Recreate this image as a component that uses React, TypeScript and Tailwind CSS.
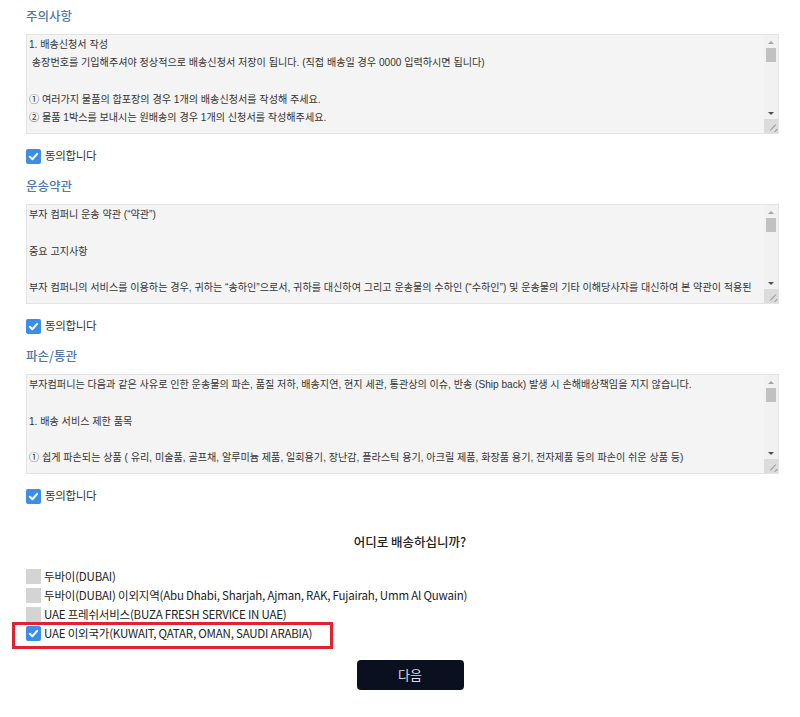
import React from "react";

const KR = { fontFamily: '"Noto Sans CJK KR", "Noto Sans", sans-serif' };
const TA = { fontFamily: '"Liberation Sans", "Noto Sans CJK KR", sans-serif' };

function Scrollbar() {
  return (
    <div className="absolute right-0 top-0 bottom-0 w-[14px] bg-[#f1f1f1] flex flex-col items-center">
      <div className="h-[12px] w-full flex items-center justify-center pt-[3px]">
        <div className="w-0 h-0 border-l-[3px] border-r-[3px] border-b-[3px] border-l-transparent border-r-transparent border-b-[#a3a3a3]" />
      </div>
      <div className="w-[10px] h-[14px] bg-[#c1c1c1] mt-[1px]" />
      <div className="flex-1" />
      <div className="h-[12px] w-full flex items-center justify-center">
        <div className="w-0 h-0 border-l-[3px] border-r-[3px] border-t-[3px] border-l-transparent border-r-transparent border-t-[#505050]" />
      </div>
      <div className="h-[14px] w-full bg-[#dcdcdc] relative overflow-hidden">
        <div className="absolute right-[1px] bottom-[5px] w-[8px] h-[1px] bg-[#9a9a9a] -rotate-45" />
        <div className="absolute right-[0px] bottom-[2px] w-[4px] h-[1px] bg-[#9a9a9a] -rotate-45" />
      </div>
    </div>
  );
}

function Box({ lines }: { lines: string[] }) {
  return (
    <div className="relative w-[753px] h-[100px] bg-[#f4f4f4] border border-[#e4e4e4] overflow-hidden">
      <div
        className="pl-[2px] pt-[1px] pr-[18px] text-[10.1px] leading-[18.25px] text-[#333] whitespace-pre"
        style={TA}
      >
        {lines.map((l, i) => (
          <div key={i} className="h-[18.25px]">
            {l}
          </div>
        ))}
      </div>
      <Scrollbar />
    </div>
  );
}

function Check({ checked }: { checked: boolean }) {
  return checked ? (
    <div className="w-[15px] h-[15px] rounded-[2px] bg-[#3b8ee6] flex items-center justify-center shrink-0">
      <svg width="11" height="11" viewBox="0 0 12 12" fill="none">
        <path d="M2 6.3 L4.8 9 L10 3.2" stroke="white" strokeWidth="2.2" strokeLinecap="round" strokeLinejoin="round" />
      </svg>
    </div>
  ) : (
    <div className="w-[15px] h-[15px] bg-[#d4d4d4] shrink-0" />
  );
}

function Section({ title, lines }: { title: string; lines: string[] }) {
  return (
    <div className="flex flex-col">
      <div className="h-[20px] flex items-center text-[12.5px] font-medium text-[#5079a6]" style={KR}>
        {title}
      </div>
      <div className="mt-[8px]">
        <Box lines={lines} />
      </div>
      <div className="mt-[12px] h-[20px] flex items-center gap-[4px]">
        <Check checked />
        <span className="text-[11.5px] tracking-[-0.3px] text-[#333]" style={KR}>
          동의합니다
        </span>
      </div>
      <div className="h-[10px]" />
    </div>
  );
}

export default function App() {
  const options = [
    "두바이(DUBAI)",
    "두바이(DUBAI) 이외지역(Abu Dhabi, Sharjah, Ajman, RAK, Fujairah, Umm Al Quwain)",
    "UAE 프레쉬서비스(BUZA FRESH SERVICE IN UAE)",
    "UAE 이외국가(KUWAIT, QATAR, OMAN, SAUDI ARABIA)",
  ];
  return (
    <div className="w-[800px] h-[717px] bg-white pl-[26px] pr-[6px] pt-[6px] overflow-hidden">
      <Section
        title="주의사항"
        lines={[
          "1. 배송신청서 작성",
          " 송장번호를 기입해주셔야 정상적으로 배송신청서 저장이 됩니다. (직접 배송일 경우 0000 입력하시면 됩니다)",
          "",
          "① 여러가지 물품의 합포장의 경우 1개의 배송신청서를 작성해 주세요.",
          "② 물품 1박스를 보내시는 원배송의 경우 1개의 신청서를 작성해주세요.",
        ]}
      />
      <Section
        title="운송약관"
        lines={[
          "부자 컴퍼니 운송 약관 (“약관”)",
          "",
          "중요 고지사항",
          "",
          "부자 컴퍼니의 서비스를 이용하는 경우, 귀하는 “송하인”으로서, 귀하를 대신하여 그리고 운송물의 수하인 (“수하인”) 및 운송물의 기타 이해당사자를 대신하여 본 약관이 적용된",
        ]}
      />
      <Section
        title="파손/통관"
        lines={[
          "부자컴퍼니는 다음과 같은 사유로 인한 운송물의 파손, 품질 저하, 배송지연, 현지 세관, 통관상의 이슈, 반송 (Ship back) 발생 시 손해배상책임을 지지 않습니다.",
          "",
          "1. 배송 서비스 제한 품목",
          "",
          "① 쉽게 파손되는 상품 ( 유리, 미술품, 골프채, 알루미늄 제품, 일회용기, 장난감, 플라스틱 용기, 아크릴 제품, 화장품 용기, 전자제품 등의 파손이 쉬운 상품 등)",
        ]}
      />
      <div className="mt-[16px] h-[20px] flex items-center justify-center text-[12.5px] font-medium text-[#222]" style={KR}>
        어디로 배송하십니까?
      </div>
      <div className="mt-[15px] flex flex-col">
        {options.map((o, i) => (
          <div key={i} className="relative h-[19px] flex items-center gap-[3px]">
            {i === 3 && (
              <div className="absolute left-[-14px] w-[321px] top-[-2px] bottom-[-6px] border-[3px] border-[#e0242f]" />
            )}
            <Check checked={i === 3} />
            <span className="text-[11.5px] tracking-[-0.2px] text-[#222] whitespace-nowrap" style={KR}>
              {o}
            </span>
          </div>
        ))}
      </div>
      <div className="mt-[17px] flex justify-center">
        <button
          className="w-[107px] h-[30px] rounded-[4px] bg-[#0b1020] text-[#d9dde6] text-[13px]"
          style={KR}
        >
          다음
        </button>
      </div>
    </div>
  );
}
